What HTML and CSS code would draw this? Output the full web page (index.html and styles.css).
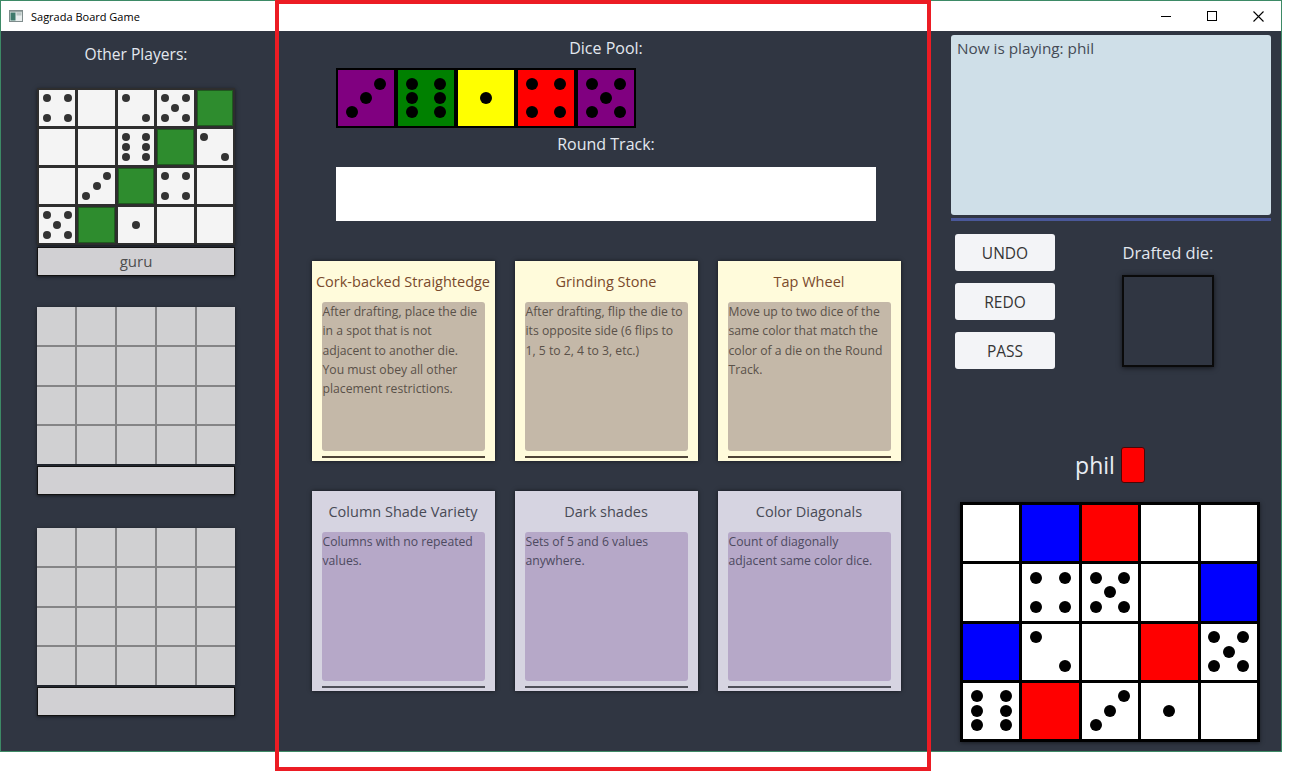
FILE: index.html
```html
<!DOCTYPE html>
<html lang="en">
<head>
<meta charset="utf-8">
<title>Sagrada Board Game</title>
<link rel="stylesheet" href="styles.css">
</head>
<body>
<div class="window">
  <header class="titlebar">
    <svg class="app-icon" width="14" height="12" viewBox="0 0 14 12">
      <rect x="0.5" y="0.5" width="13" height="11" fill="#e8eeee" stroke="#7f8c8c"/>
      <rect x="1.5" y="2.5" width="5" height="8" fill="#3f7a6c"/>
      <rect x="7.5" y="2.5" width="5" height="3" fill="#b9c6c4"/>
      <rect x="1" y="1" width="12" height="1.2" fill="#9aa8a6"/>
    </svg>
    <span class="title">Sagrada Board Game</span>
    <div class="controls">
      <span class="ctl"><svg width="10" height="10" viewBox="0 0 10 10"><line x1="0" y1="5.5" x2="10" y2="5.5" stroke="#000" stroke-width="1"/></svg></span>
      <span class="ctl"><svg width="10" height="10" viewBox="0 0 10 10"><rect x="0.5" y="0.5" width="9" height="9" fill="none" stroke="#000" stroke-width="1"/></svg></span>
      <span class="ctl"><svg width="11" height="11" viewBox="0 0 11 11"><path d="M0.5 0.5 L10.5 10.5 M10.5 0.5 L0.5 10.5" stroke="#000" stroke-width="1.1"/></svg></span>
    </div>
  </header>

  <div class="app">
    <aside class="others">
      <h2 class="heading">Other Players:</h2>

      <div class="player">
        <div class="pattern filled">
          <div class="cell sm"><i class="tl"></i><i class="tr"></i><i class="bl"></i><i class="br"></i></div>
          <div class="cell"></div>
          <div class="cell sm"><i class="tl"></i><i class="br"></i></div>
          <div class="cell sm"><i class="tl"></i><i class="tr"></i><i class="c"></i><i class="bl"></i><i class="br"></i></div>
          <div class="cell green"></div>

          <div class="cell"></div>
          <div class="cell"></div>
          <div class="cell sm"><i class="tl"></i><i class="tr"></i><i class="ml"></i><i class="mr"></i><i class="bl"></i><i class="br"></i></div>
          <div class="cell green"></div>
          <div class="cell sm"><i class="tl"></i><i class="br"></i></div>

          <div class="cell"></div>
          <div class="cell sm"><i class="tr"></i><i class="c"></i><i class="bl"></i></div>
          <div class="cell green"></div>
          <div class="cell sm"><i class="tl"></i><i class="tr"></i><i class="bl"></i><i class="br"></i></div>
          <div class="cell"></div>

          <div class="cell sm"><i class="tl"></i><i class="tr"></i><i class="c"></i><i class="bl"></i><i class="br"></i></div>
          <div class="cell green"></div>
          <div class="cell sm"><i class="c"></i></div>
          <div class="cell"></div>
          <div class="cell"></div>
        </div>
        <div class="name">guru</div>
      </div>

      <div class="player">
        <div class="pattern empty">
          <div></div><div></div><div></div><div></div><div></div>
          <div></div><div></div><div></div><div></div><div></div>
          <div></div><div></div><div></div><div></div><div></div>
          <div></div><div></div><div></div><div></div><div></div>
        </div>
        <div class="name"></div>
      </div>

      <div class="player last">
        <div class="pattern empty">
          <div></div><div></div><div></div><div></div><div></div>
          <div></div><div></div><div></div><div></div><div></div>
          <div></div><div></div><div></div><div></div><div></div>
          <div></div><div></div><div></div><div></div><div></div>
        </div>
        <div class="name"></div>
      </div>
    </aside>

    <main class="board">
      <div class="table">
        <h2 class="heading center">Dice Pool:</h2>
        <div class="pool">
          <div class="die purple"><i class="tr"></i><i class="c"></i><i class="bl"></i></div>
          <div class="die dgreen"><i class="tl"></i><i class="tr"></i><i class="ml"></i><i class="mr"></i><i class="bl"></i><i class="br"></i></div>
          <div class="die yellow"><i class="c"></i></div>
          <div class="die red"><i class="tl"></i><i class="tr"></i><i class="bl"></i><i class="br"></i></div>
          <div class="die purple"><i class="tl"></i><i class="tr"></i><i class="c"></i><i class="bl"></i><i class="br"></i></div>
        </div>
        <h2 class="heading center track-label">Round Track:</h2>
        <div class="round-track"></div>
      </div>

      <div class="cards">
        <div class="card tool">
          <div class="card-title">Cork-backed Straightedge</div>
          <div class="card-body">After drafting, place the die<br>in a spot that is not<br>adjacent to another die.<br>You must obey all other<br>placement restrictions.</div>
          <div class="card-rule"></div>
        </div>
        <div class="card tool">
          <div class="card-title">Grinding Stone</div>
          <div class="card-body">After drafting, flip the die to<br>its opposite side (6 flips to<br>1, 5 to 2, 4 to 3, etc.)</div>
          <div class="card-rule"></div>
        </div>
        <div class="card tool">
          <div class="card-title">Tap Wheel</div>
          <div class="card-body">Move up to two dice of the<br>same color that match the<br>color of a die on the Round<br>Track.</div>
          <div class="card-rule"></div>
        </div>
        <div class="card objective">
          <div class="card-title">Column Shade Variety</div>
          <div class="card-body">Columns with no repeated<br>values.</div>
          <div class="card-rule"></div>
        </div>
        <div class="card objective">
          <div class="card-title">Dark shades</div>
          <div class="card-body">Sets of 5 and 6 values<br>anywhere.</div>
          <div class="card-rule"></div>
        </div>
        <div class="card objective">
          <div class="card-title">Color Diagonals</div>
          <div class="card-body">Count of diagonally<br>adjacent same color dice.</div>
          <div class="card-rule"></div>
        </div>
      </div>
    </main>

    <aside class="me">
      <div class="log">Now is playing: phil</div>
      <div class="log-rule"></div>

      <div class="actions">
        <div class="buttons">
          <button class="btn">UNDO</button>
          <button class="btn">REDO</button>
          <button class="btn">PASS</button>
        </div>
        <div class="drafted">
          <h2 class="heading center">Drafted die:</h2>
          <div class="drafted-slot"></div>
        </div>
      </div>

      <div class="me-name">
        <span class="me-label">phil</span>
        <span class="me-color"></span>
      </div>

      <div class="my-pattern">
        <div class="cell white"></div>
        <div class="cell blue"></div>
        <div class="cell red"></div>
        <div class="cell white"></div>
        <div class="cell white"></div>

        <div class="cell white"></div>
        <div class="cell white lg"><i class="tl"></i><i class="tr"></i><i class="bl"></i><i class="br"></i></div>
        <div class="cell white lg"><i class="tl"></i><i class="tr"></i><i class="c"></i><i class="bl"></i><i class="br"></i></div>
        <div class="cell white"></div>
        <div class="cell blue"></div>

        <div class="cell blue"></div>
        <div class="cell white lg"><i class="tl"></i><i class="br"></i></div>
        <div class="cell white"></div>
        <div class="cell red"></div>
        <div class="cell white lg"><i class="tl"></i><i class="tr"></i><i class="c"></i><i class="bl"></i><i class="br"></i></div>

        <div class="cell white lg"><i class="tl"></i><i class="tr"></i><i class="ml"></i><i class="mr"></i><i class="bl"></i><i class="br"></i></div>
        <div class="cell red"></div>
        <div class="cell white lg"><i class="tr"></i><i class="c"></i><i class="bl"></i></div>
        <div class="cell white lg"><i class="c"></i></div>
        <div class="cell white"></div>
      </div>
    </aside>
  </div>
</div>

<div class="annotation"></div>
</body>
</html>
```

FILE: styles.css
```css
* { box-sizing: border-box; }

html, body {
  margin: 0;
  padding: 0;
  background: #ffffff;
  font-family: "Open Sans", "Noto Sans", "Liberation Sans", sans-serif;
}

body {
  width: 1298px;
  height: 775px;
  position: relative;
  overflow: hidden;
}

.window {
  width: 1282px;
  height: 752px;
  border: 1px solid #3d8a66;
  display: flex;
  flex-direction: column;
}

/* ---------- title bar ---------- */
.titlebar {
  height: 30px;
  background: #ffffff;
  display: flex;
  align-items: center;
  flex: none;
}

.app-icon {
  margin-left: 8px;
  margin-right: 8px;
  flex: none;
}

.title {
  font-size: 11px;
  color: #000;
}

.controls {
  margin-left: auto;
  display: flex;
  height: 30px;
}

.ctl {
  width: 46px;
  height: 30px;
  display: flex;
  align-items: center;
  justify-content: center;
}

/* ---------- app body ---------- */
.app {
  flex: 1;
  background: #303642;
  display: flex;
}

.heading {
  margin: 0;
  font-size: 16px;
  font-weight: 400;
  line-height: 20px;
  color: #e3e8ef;
  white-space: nowrap;
}

.heading.center { text-align: center; }

/* ---------- left column ---------- */
.others {
  width: 272px;
  flex: none;
  display: flex;
  flex-direction: column;
  align-items: center;
  padding-top: 13px;
  padding-right: 2px;
}

.others .heading { font-size: 15.6px; }

.player {
  width: 198px;
  margin-top: 31px;
}

.others .heading + .player { margin-top: 24px; }

.player.last { margin-top: 33px; }

.pattern {
  width: 198px;
  height: 157px;
  display: grid;
  grid-template-columns: repeat(5, 1fr);
  grid-template-rows: repeat(4, 1fr);
  box-shadow: 0 1px 4px rgba(0, 0, 0, 0.55);
}

.pattern.filled {
  background: #2e2e2e;
  padding: 2px;
  gap: 3px;
}

.pattern.filled .cell {
  background: #f4f4f4;
}

.pattern.filled .cell.green {
  background: #2e8c2e;
  box-shadow: inset 0 0 0 1px #1f5a1f;
}

.pattern.empty {
  background: #848486;
  gap: 2px;
}

.pattern.empty > div {
  background: #d0d0d2;
}

.name {
  margin-top: 2px;
  height: 29px;
  background: #d1d0d3;
  border: 1px solid #121212;
  box-shadow: 0 1px 3px rgba(0, 0, 0, 0.5);
  text-align: center;
  font-size: 15px;
  line-height: 26px;
  color: #4e4e4e;
}

/* pips */
.cell, .die {
  display: grid;
  grid-template-columns: repeat(3, 1fr);
  grid-template-rows: repeat(3, 1fr);
}

.cell.sm { padding: 2.5px; }
.cell.lg, .die { padding: 6.5px; }

.cell i, .die i {
  display: block;
  place-self: center;
  border-radius: 50%;
}

.cell.sm i {
  width: 8px;
  height: 8px;
  background: #333333;
}

.cell.lg i, .die i {
  width: 12px;
  height: 12px;
  background: #000000;
}

.tl { grid-area: 1 / 1; }
.tr { grid-area: 1 / 3; }
.ml { grid-area: 2 / 1; }
.mr { grid-area: 2 / 3; }
.c  { grid-area: 2 / 2; }
.bl { grid-area: 3 / 1; }
.br { grid-area: 3 / 3; }

/* ---------- center column ---------- */
.board {
  width: 666px;
  flex: none;
  display: flex;
  flex-direction: column;
  align-items: center;
  padding-top: 7px;
}

.table {
  width: 540px;
}

.pool {
  margin-top: 10px;
  width: 300px;
  height: 60px;
  background: #000;
  padding: 2px;
  display: flex;
  gap: 4px;
}

.die {
  width: 56px;
  height: 56px;
  flex: none;
}

.purple { background: #800080; }
.dgreen { background: #008000; }
.yellow { background: #ffff00; }
.red { background: #ff0000; }
.blue { background: #0000ff; }
.white { background: #ffffff; }

.track-label { margin-top: 6px; }

.round-track {
  margin-top: 13px;
  height: 54px;
  background: #ffffff;
}

.cards {
  margin-top: 40px;
  display: grid;
  grid-template-columns: repeat(3, 183px);
  grid-auto-rows: 200px;
  column-gap: 20px;
  row-gap: 30px;
}

.card {
  padding: 11px 10px 0;
  box-shadow: 0 0 4px rgba(0, 0, 0, 0.6);
  display: flex;
  flex-direction: column;
}

.card-title {
  margin: 0 -10px;
  font-size: 14.5px;
  line-height: 20px;
  text-align: center;
  white-space: nowrap;
}

.card-body {
  margin-top: 10px;
  height: 149px;
  border-radius: 3px;
  padding: 0 0 0 1px;
  font-size: 12.2px;
  line-height: 19.3px;
  white-space: nowrap;
  overflow: hidden;
}

.card-rule {
  margin-top: 5px;
  height: 2px;
}

.tool { background: #fffbdb; }
.tool .card-title { color: #7a4a2b; }
.tool .card-body { background: #c4b8a8; color: #5a5149; }
.tool .card-rule { background: #4f4437; }

.objective { background: #d6d4e1; }
.objective .card-title { color: #484a55; }
.objective .card-body { background: #b6a8c8; color: #4d4a60; }
.objective .card-rule { background: #50505a; }

/* ---------- right column ---------- */
.me {
  width: 342px;
  flex: none;
  display: flex;
  flex-direction: column;
  padding-top: 4px;
}

.log {
  margin-left: 12px;
  width: 320px;
  height: 180px;
  background: #cfdfe8;
  border-radius: 3px;
  padding: 3px 6px;
  font-size: 15.3px;
  line-height: 21px;
  color: #444a55;
}

.log-rule {
  margin-left: 12px;
  margin-top: 3px;
  width: 320px;
  height: 3px;
  background: #4a589a;
}

.actions {
  display: flex;
  align-items: flex-start;
}

.buttons {
  margin-left: 16px;
  margin-top: 13px;
  display: flex;
  flex-direction: column;
  gap: 12px;
}

.btn {
  width: 100px;
  height: 37px;
  border: none;
  border-radius: 3px;
  background: #f3f4f7;
  font-family: inherit;
  font-size: 15.5px;
  color: #353535;
  padding: 0;
}

.drafted {
  margin-left: 67px;
  margin-top: 22px;
  width: 92px;
  display: flex;
  flex-direction: column;
  align-items: center;
}

.drafted .heading { font-size: 16.5px; }

.drafted-slot {
  margin-top: 12px;
  width: 92px;
  height: 92px;
  border: 2px solid #0a0a0a;
  background: #303642;
  box-shadow: 0 1px 5px rgba(0, 0, 0, 0.6);
}

.me-name {
  margin-top: 78px;
  height: 36px;
  display: flex;
  align-items: center;
  justify-content: center;
  gap: 6px;
}

.me-label {
  font-size: 23px;
  color: #e8edf4;
}

.me-color {
  width: 24px;
  height: 36px;
  background: #ff0000;
  border: 1.5px solid #4a0606;
  border-radius: 3px;
}

.my-pattern {
  margin: 19px auto 0;
  width: 300px;
  height: 240px;
  background: #000;
  padding: 3px;
  gap: 3px;
  display: grid;
  grid-template-columns: repeat(5, 1fr);
  grid-template-rows: repeat(4, 1fr);
  box-shadow: 0 1px 4px rgba(0, 0, 0, 0.5);
}

/* ---------- overlay annotation ---------- */
.annotation {
  position: absolute;
  left: 275px;
  top: 0;
  width: 656px;
  height: 771px;
  border: 4px solid #ec1c24;
  pointer-events: none;
}
```
